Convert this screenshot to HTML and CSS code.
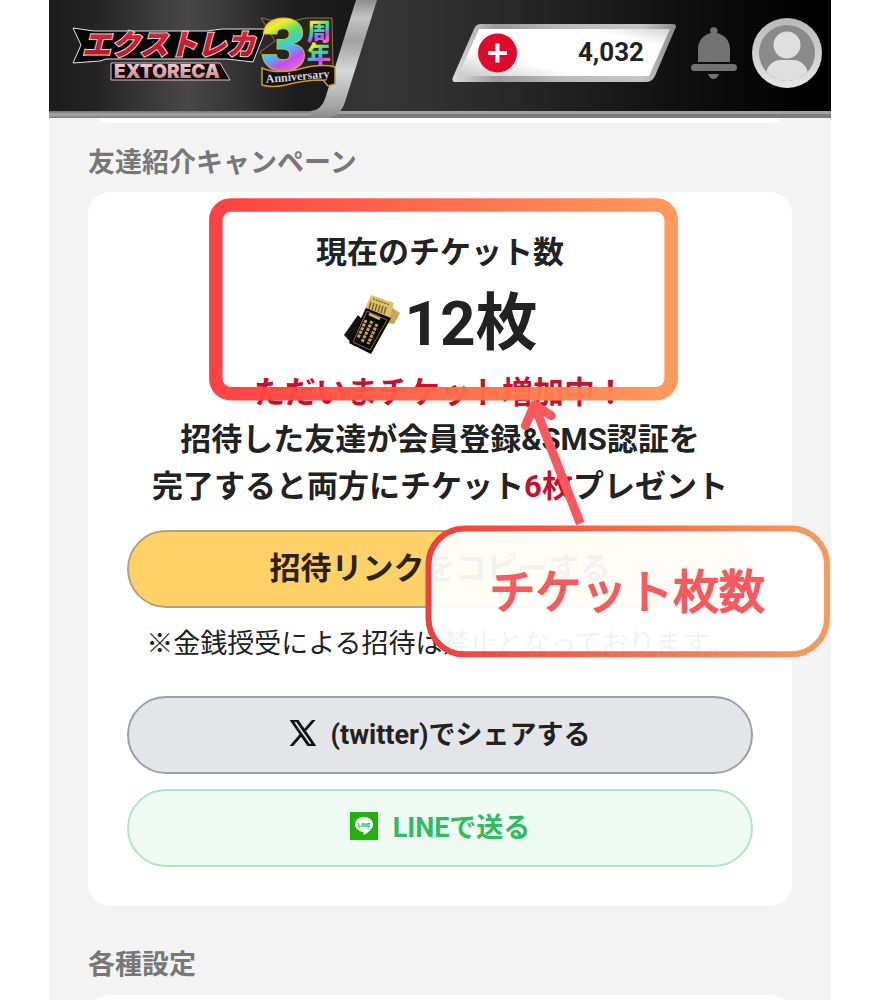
FILE: index.html
```
<!DOCTYPE html>
<html lang="ja">
<head>
    <meta charset="UTF-8">
    <meta name="viewport" content="width=device-width, initial-scale=1.0">
    <title>友達紹介キャンペーン</title>
    <link rel="stylesheet" href="styles.css">
</head>
<body>
    <div class="app">
        <header>
            <svg class="header-bg" viewBox="0 0 782 118" preserveAspectRatio="xMinYMin slice" aria-hidden="true">
                <defs>
                    <linearGradient id="panel">
                        <stop offset="0" stop-color="#1b1b1b"/>
                        <stop offset=".16" stop-color="#252525"/>
                        <stop offset=".45" stop-color="#484848"/>
                        <stop offset=".8" stop-color="#1d1d1d"/>
                        <stop offset="1" stop-color="#181818"/>
                    </linearGradient>
                    <linearGradient id="stripe" x1="0" y1="0" x2="0" y2="1">
                        <stop offset="0" stop-color="#8d8d8d"/>
                        <stop offset=".15" stop-color="#c4c4c4"/>
                        <stop offset=".35" stop-color="#a0a0a0"/>
                        <stop offset=".6" stop-color="#d8d8d8"/>
                        <stop offset=".9" stop-color="#a5a5a5"/>
                        <stop offset="1" stop-color="#8a8a8a"/>
                    </linearGradient>
                    <linearGradient id="rail" x1="0" y1="0" x2="0" y2="1">
                        <stop offset="0" stop-color="#747474"/>
                        <stop offset=".5" stop-color="#a6a6a6"/>
                        <stop offset="1" stop-color="#7d7d7d"/>
                    </linearGradient>
                </defs>
                <path d="M0 0H308L276 100Q272 111 260 111H0Z" fill="url(#panel)"/>
                <path d="M0 111H270V118H0Z" fill="url(#rail)"/>
                <path d="M270 114H782V118H270Z" fill="#7b7b7b"/>
                <path d="M307 0H328L296 102Q291 117 278 118H262V111Q272 110 276 99Z" fill="url(#stripe)"/>
            </svg>
            <a class="logo" href="#" aria-label="エクストレカ">
                <svg width="270" height="78" viewBox="0 0 270 78">
                    <defs>
                        <linearGradient id="red" x1="0" y1="0" x2="0" y2="1">
                            <stop offset="0" stop-color="#e8293c"/>
                            <stop offset="1" stop-color="#b01424"/>
                        </linearGradient>
                        <linearGradient id="pink" x1="0" y1="0" x2="0" y2="1">
                            <stop offset="0" stop-color="#f8dede"/>
                            <stop offset="1" stop-color="#c5707c"/>
                        </linearGradient>
                        <linearGradient id="rainbow" x1="0" y1="0" x2=".3" y2="1">
                            <stop offset=".1" stop-color="#f58a2a"/>
                            <stop offset=".35" stop-color="#f5ee2e"/>
                            <stop offset=".5" stop-color="#52e06a"/>
                            <stop offset=".65" stop-color="#38c6f0"/>
                            <stop offset=".8" stop-color="#c44df0"/>
                            <stop offset=".95" stop-color="#f06ad0"/>
                        </linearGradient>
                    </defs>
                    <path d="M3 14L24 17L137 17L152 15H196L183 48L157 45H36L30 47L3 49L11 31Z" fill="#050505" stroke="#e6e6e6" stroke-width="1"/>
                    <text class="logo-kana" x="12" y="41">エクストレカ</text>
                    <path d="M41 49H150L160 66H41Z" fill="#120405" stroke="#d8c6c8" stroke-width="1"/>
                    <text class="logo-latin" x="44" y="64">EXTORECA</text>
                    <path d="M191 4L214 9L236 4L262 4L263 52L240 56L200 55L190 38L205 27Z" fill="#2a2519" stroke="#8a7a4c" stroke-width="1"/>
                    <text class="logo-three" x="190" y="56">3</text>
                    <text class="logo-year" x="237" y="26">周</text>
                    <text class="logo-year" x="237" y="49">年</text>
                    <path d="M192 54Q204 60 226 56Q250 49 265 53V70L258 72L253 66Q234 66 216 71Q202 74 192 71Z" fill="#14100c" stroke="#c79b35" stroke-width="1.5"/>
                    <text class="logo-anniv" x="196" y="69" transform="rotate(-5 196 69)">Anniversary</text>
                </svg>
            </a>
            <button class="points" type="button" aria-label="ポイント追加">
                <svg class="points-bg" viewBox="0 0 224 58" aria-hidden="true">
                    <defs>
                        <linearGradient id="frame" x1="0" y1="0" x2="1" y2="0">
                            <stop offset="0" stop-color="#dcdcdc"/>
                            <stop offset=".2" stop-color="#9a9a9a"/>
                            <stop offset=".5" stop-color="#bbb"/>
                            <stop offset=".85" stop-color="#c4c4c4"/>
                            <stop offset="1" stop-color="#8c8c8c"/>
                        </linearGradient>
                        <linearGradient id="plate" x1="0" y1="1" x2="1" y2="0">
                            <stop offset="0" stop-color="#c9c9c9"/>
                            <stop offset=".3" stop-color="#fff"/>
                            <stop offset=".8" stop-color="#fff"/>
                            <stop offset="1" stop-color="#d2d2d2"/>
                        </linearGradient>
                    </defs>
                    <path d="M29 0H220Q226 0 223 5L203 52Q200 58 194 58H4Q-1 58 1 53L22 5Q24 0 29 0Z" fill="url(#frame)"/>
                    <path d="M27 5H218L197 52H6Z" fill="url(#plate)"/>
                    <circle cx="45.500" cy="29" r="19.500" fill="#df0a2c"/>
                    <path d="M45.500 19.500V38.500M36 29H55" stroke="#fff" stroke-width="4"/>
                </svg>
                <span>4,032</span>
            </button>
            <button class="icon-btn" type="button" aria-label="お知らせ">
                <svg width="46" height="54" viewBox="0 0 46 54" fill="#727272">
                    <path d="M19 5A3.800 3.800 0 0 1 26.600 5L26 7C34 9 39 15 39 23V36H7V23C7 15 12 9 20 7Z"/>
                    <rect x="0" y="38" width="46" height="7" rx="3.500"/>
                    <path d="M17 48H28Q26 53 22.500 53T17 48Z"/>
                </svg>
            </button>
            <button class="icon-btn" type="button" aria-label="マイページ">
                <svg width="70" height="70" viewBox="0 0 70 70">
                    <defs>
                        <linearGradient id="ring" x1="0" y1="0" x2="0" y2="1">
                            <stop offset="0" stop-color="#b9b9b9"/>
                            <stop offset="1" stop-color="#e6e6e6"/>
                        </linearGradient>
                        <clipPath id="face"><circle cx="35" cy="35" r="28"/></clipPath>
                    </defs>
                    <circle cx="35" cy="35" r="35" fill="url(#ring)"/>
                    <circle cx="35" cy="35" r="28" fill="#8b8b8b"/>
                    <g clip-path="url(#face)" fill="#dfdfdf">
                        <circle cx="35" cy="27" r="13.500"/>
                        <rect x="14" y="42" width="42" height="30" rx="15"/>
                    </g>
                </svg>
            </button>
        </header>

        <main>
            <div class="card card-prev"></div>

            <h2>友達紹介キャンペーン</h2>
            <section class="card campaign">
                <p class="lead">現在のチケット数</p>
                <p class="count">
                    <svg width="58" height="62" viewBox="0 0 58 62" aria-hidden="true">
                        <path d="M36 5L58 20L52 31L34 28Z" fill="#c9a650"/>
                        <path d="M29 2L52 10L47 27L22 18Z" fill="#dfc06a"/>
                        <path d="M31 6L48 12" stroke="#8a6e2a" stroke-width="1.500" stroke-dasharray="2 1"/>
                        <path d="M29 9L27 16M32 10L30 17M35 11L33 18M38 12L36 19M41 13L39 20M44 14L42 21" stroke="#7b6220" stroke-width="1.500"/>
                        <path d="M16 22L2 42L12 53L34 40Z" fill="#15110c"/>
                        <path d="M24 15L49 25L29 61L7 50Z" fill="#080808"/>
                        <path d="M25 18L45 27L28 57L11 49Z" fill="none" stroke="#8a6e2a" stroke-width="1"/>
                        <path d="M27 21L38 26" stroke="#d8ba66" stroke-width="2.500"/>
                        <path d="M24 27L16 45M30 28L20 49M35 31L26 51" stroke="#c9a548" stroke-width="3" stroke-dasharray="3 1"/>
                    </svg>
                    12枚
                </p>
                <p class="lead red">ただいまチケット増加中！</p>
                <p class="lead">招待した友達が会員登録&amp;SMS認証を<br>完了すると両方にチケット<span class="red">6枚</span>プレゼント</p>
                <button class="btn btn-copy" type="button">招待リンクをコピーする</button>
                <p class="note">※金銭授受による招待は禁止となっております。</p>
                <a class="btn btn-x" href="#">
                    <svg width="26" height="26" viewBox="0 0 24 24" fill="#111" stroke="#111" aria-hidden="true">
                        <path d="M14.230 10.160L22.980 0H20.900L13.310 8.820L7.240 0H.240L9.410 13.340L.240 24H2.310L10.330 14.680L16.730 24H23.730ZM11.390 13.460L10.460 12.130L3.060 1.560H6.250L12.220 10.090L13.150 11.420L20.910 22.510H17.720Z"/>
                    </svg>
                    (twitter)でシェアする
                </a>
                <a class="btn btn-line" href="#">
                    <svg width="28" height="28" viewBox="0 0 28 28" aria-hidden="true">
                        <rect width="28" height="28" fill="#1fb30a"/>
                        <path d="M14 5C8.500 5 5 8.500 5 12.500C5 16.500 8.500 19 13 19.800C14 20 13.500 21.500 13.500 23C17 21.500 23 17.500 23 12.500C23 8.500 19.500 5 14 5Z" fill="#fff"/>
                        <text class="line-mark" x="14" y="15">LINE</text>
                    </svg>
                    LINEで送る
                </a>

                <!-- callout over the card -->
                <svg class="callout" viewBox="0 0 705 714" preserveAspectRatio="xMidYMin meet">
                    <defs>
                        <linearGradient id="warm">
                            <stop offset="0" stop-color="#ff3a3d"/>
                            <stop offset="1" stop-color="#ff9655"/>
                        </linearGradient>
                        <linearGradient id="warm2">
                            <stop offset="0" stop-color="#ee3f3f"/>
                            <stop offset="1" stop-color="#f79a5c"/>
                        </linearGradient>
                    </defs>
                    <rect x="128" y="13" width="456" height="189" rx="15" fill="none" stroke="url(#warm)" stroke-width="13.500" opacity=".96"/>
                    <path d="M493 332L448 216" fill="none" stroke="#fb575c" stroke-width="9"/>
                    <path d="M438 234L447 213L464 224" fill="none" stroke="#fb575c" stroke-width="9" stroke-linecap="round" stroke-linejoin="round"/>
                    <rect x="341" y="337" width="399" height="126" rx="36" fill="#fff" fill-opacity=".94" stroke="url(#warm2)" stroke-width="6"/>
                    <text class="callout-text" x="540" y="417">チケット枚数</text>
                </svg>
            </section>

            <h2>各種設定</h2>
            <div class="card card-next"></div>
        </main>
    </div>
</body>
</html>
```

FILE: styles.css
```
* {
    margin: 0;
    padding: 0;
    box-sizing: border-box;
}
body {
    font-family: Roboto, "Noto Sans CJK JP", sans-serif;
    background: #fff;
    color: #222;
}
.app {
    display: flex;
    flex-direction: column;
    margin: 0 49px;
    height: 100vh;
    overflow: hidden;
    background: #f3f3f3;
}
header {
    position: relative;
    z-index: 1;
    display: flex;
    flex-shrink: 0;
    align-items: center;
    gap: 15px;
    height: 117px;
    padding: 0 9px 6px 21px;
    background: linear-gradient(90deg, #1c1c1c 0%, #363636 42%, #272727 60%, #111 80%, #000 97%);
    border-bottom: 6px solid #a0a0a0;
}
.header-bg {
    position: absolute;
    top: 0;
    left: 0;
    width: 100%;
    height: 118px;
}
.logo {
    position: relative;
    margin-right: auto;
}
.logo svg, .icon-btn svg {
    display: block;
}
.logo-kana {
    font: italic 900 29px "Noto Sans CJK JP", sans-serif;
    fill: url(#red);
    stroke: #f3d5d5;
    stroke-width: 2px;
    paint-order: stroke;
}
.logo-latin {
    font: 900 19px Inter, sans-serif;
    fill: url(#pink);
}
.logo-three {
    font: 900 70px Inter, sans-serif;
    fill: url(#rainbow);
    stroke: #d8b64a;
    stroke-width: 1px;
}
.logo-year {
    font: 900 24px "Noto Sans CJK JP", sans-serif;
    fill: url(#rainbow);
}
.logo-anniv {
    font: 700 12px "Liberation Serif", serif;
    fill: #d9cfe0;
}
button {
    border: none;
    background: none;
    font-family: inherit;
    color: inherit;
    cursor: pointer;
}
.points {
    position: relative;
    width: 224px;
    height: 58px;
    padding: 0 32px 2px 0;
    text-align: right;
    font-size: 26px;
    font-weight: 700;
}
.points-bg {
    position: absolute;
    top: 0;
    left: 0;
    width: 100%;
    height: 100%;
}
.points span {
    position: relative;
}
.icon-btn {
    position: relative;
}
main {
    padding: 0 39px;
}
h2 {
    font-size: 27px;
    line-height: 40px;
    font-weight: 700;
    color: #777;
}
.card {
    background: #fff;
    border-radius: 22px;
}
.card-prev {
    height: 60px;
    margin-top: -54px;
    margin-bottom: 20px;
}
.campaign {
    position: relative;
    margin: 9px 0 39px;
    padding: 37px 39px 39px;
    text-align: center;
}
.lead {
    font-size: 31px;
    line-height: 47px;
    font-weight: 700;
}
.red {
    color: #c8102e;
}
.count {
    display: flex;
    align-items: center;
    justify-content: center;
    gap: 4px;
    padding-top: 3px;
    font-size: 62px;
    line-height: 90px;
    font-weight: 700;
}
.btn {
    display: flex;
    align-items: center;
    justify-content: center;
    gap: 15px;
    width: 100%;
    height: 78px;
    padding-bottom: 5px;
    border: 2px solid;
    border-radius: 39px;
    font-size: 27px;
    font-weight: 700;
    text-decoration: none;
}
.btn-copy {
    margin-top: 20px;
    padding-bottom: 7px;
    background: #ffd166;
    border-color: #b3a37c;
    color: #2b230f;
    font-size: 31px;
}
.note {
    margin: 16px 0 32px;
    font-size: 27px;
    line-height: 40px;
    white-space: nowrap;
}
.btn-x {
    background: #e4e5e9;
    border-color: #9c9fac;
    color: #222;
}
.btn-line {
    margin-top: 15px;
    background: #effaf3;
    border-color: #b4e3c3;
    color: #2dbd60;
}
.line-mark {
    font: 700 6px Roboto, sans-serif;
    fill: #1fb30a;
    text-anchor: middle;
}
.callout {
    position: absolute;
    top: 0;
    left: 0;
    width: 100%;
    overflow: visible;
    pointer-events: none;
}
.callout-text {
    font: 400 46px "Noto Sans CJK JP", sans-serif;
    fill: #f75a5e;
    stroke: #f75a5e;
    stroke-width: 2px;
    stroke-linejoin: round;
    text-anchor: middle;
}
.card-next {
    height: 80px;
    margin-top: 10px;
}
```
